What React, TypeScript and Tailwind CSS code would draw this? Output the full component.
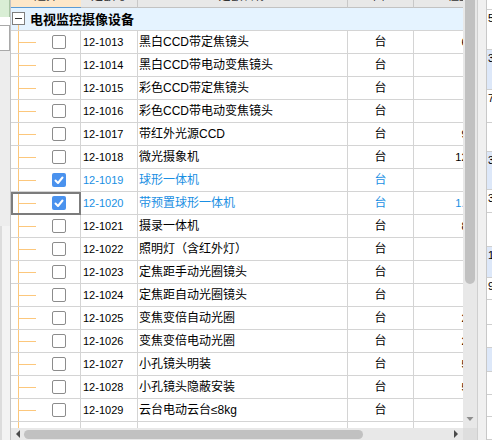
import React from "react";

type Row = {
  code: string;
  name: string;
  qty: string;
  checked?: boolean;
  focused?: boolean;
  partial?: boolean;
};

const rows: Row[] = [
  { code: "12-1013", name: "黑白CCD带定焦镜头", qty: "6.000" },
  { code: "12-1014", name: "黑白CCD带电动变焦镜头", qty: "" },
  { code: "12-1015", name: "彩色CCD带定焦镜头", qty: "" },
  { code: "12-1016", name: "彩色CCD带电动变焦镜头", qty: "" },
  { code: "12-1017", name: "带红外光源CCD", qty: "9.000" },
  { code: "12-1018", name: "微光摄象机", qty: "12.000" },
  { code: "12-1019", name: "球形一体机", qty: "", checked: true },
  { code: "12-1020", name: "带预置球形一体机", qty: "1.0000", checked: true, focused: true },
  { code: "12-1021", name: "摄录一体机", qty: "8.000" },
  { code: "12-1022", name: "照明灯（含红外灯）", qty: "" },
  { code: "12-1023", name: "定焦距手动光圈镜头", qty: "" },
  { code: "12-1024", name: "定焦距自动光圈镜头", qty: "" },
  { code: "12-1025", name: "变焦变倍自动光圈", qty: "2.000" },
  { code: "12-1026", name: "变焦变倍电动光圈", qty: "2.000" },
  { code: "12-1027", name: "小孔镜头明装", qty: "5.000" },
  { code: "12-1028", name: "小孔镜头隐蔽安装", qty: "5.000" },
  { code: "12-1029", name: "云台电动云台≤8kg", qty: "" },
  { code: "", name: "", qty: "", partial: true },
];

// strip of the neighbouring grid that peeks in on the right
const sideRows: { h: number; blue?: boolean; t?: string }[] = [
  { h: 10 },
  { h: 40, t: "5" },
  { h: 40, blue: true, t: "3" },
  { h: 33, t: "7" },
  { h: 29 },
  { h: 38, blue: true, t: "3" },
  { h: 23, t: "3" },
  { h: 34 },
  { h: 31, blue: true, t: "1" },
  { h: 22, t: "9" },
  { h: 25 },
  { h: 23 },
  { h: 24, blue: true },
  { h: 23 },
  { h: 22 },
  { h: 23 },
];

const cols = "grid grid-cols-[70px_57px_210px_66px_79px]";

function Checkbox({ checked }: { checked?: boolean }) {
  if (checked) {
    return (
      <span className="ml-[16px] flex h-[14px] w-[14px] items-center justify-center rounded-[2px] bg-[#4a92ee]">
        <svg viewBox="0 0 14 14" className="h-[14px] w-[14px]">
          <polyline points="3.5,7.5 6,10 10.5,4.5" fill="none" stroke="white" strokeWidth={2} strokeLinecap="round" strokeLinejoin="round" />
        </svg>
      </span>
    );
  }
  return <span className="ml-[16px] h-[14px] w-[14px] rounded-[2px] border border-[#8c8c8c] bg-white" />;
}

export default function App() {
  return (
    <div className="flex h-[440px] w-[492px] overflow-hidden bg-white font-['Liberation_Sans','Noto_Sans_CJK_SC',sans-serif] text-black">
      {/* left neighbour panel */}
      <div className="flex w-[10px] flex-col bg-[#ececec]">
        <div className="h-[17px] border-r border-[#a8c4a4] bg-[#d9eed5]" />
        <div className="h-[8px] bg-white" />
        <div className="h-[26px] border-y border-r border-[#a9a9a9] bg-white" />
        <div className="h-[175px] bg-[#ededed]" />
        <div className="flex-1 border-l-2 border-[#dcdcdc] bg-[#f3f3f3]" />
      </div>

      {/* main grid */}
      <div className="flex w-[453px] flex-col border-l border-[#c4c4c4]">
        <div className="flex-1 overflow-hidden">
          <div className="w-[482px]">
            <div className={`${cols} h-[8px] text-[12px] leading-[14px] text-[#333]`}>
              {["选择", "定额号", "定额名称", "单位", "工程量"].map((h, i) => (
                <div
                  key={h}
                  className={`flex justify-center overflow-hidden border-b ${
                    i === 0 ? "border-[#5b9bd5] bg-[#fde7c9]" : "border-r border-b-[#c2c2c2] border-r-[#c8c8c8] bg-[#e8e8e8]"
                  }`}
                >
                  <span className="-mt-[11px]">{h}</span>
                </div>
              ))}
            </div>

            <div className="flex h-[23px] items-stretch border-b border-[#d4d4d4] bg-[#e5f3ff]">
              <div className="ml-px flex w-[13px] flex-col items-center pt-[4px]">
                <span className="flex h-[13px] w-[13px] items-center justify-center border border-[#7f7f7f] bg-white">
                  <span className="h-px w-[7px] bg-[#333]" />
                </span>
                <span className="w-px flex-1 bg-[#fcc77c]" />
              </div>
              <span className="ml-[5px] self-center text-[13px] font-bold leading-none">电视监控摄像设备</span>
            </div>

            {rows.map((r, idx) => {
              const tone = r.checked ? "text-[#1a8fe3]" : "text-black";
              return (
                <div key={idx} className={`${cols} h-[23px] ${tone}`}>
                  <div
                    className={`flex items-center border-r border-b border-[#d4d4d4] ${
                      r.focused ? "outline-2 -outline-offset-2 outline-[#7c7c7c]" : ""
                    }`}
                  >
                    <span className="ml-[7px] w-px self-stretch bg-[#fcc77c]" />
                    {!r.partial && <span className="h-px w-[17px] bg-[#fcc77c]" />}
                    {!r.partial && <Checkbox checked={r.checked} />}
                  </div>
                  <div className="flex items-center border-r border-b border-[#d4d4d4] pl-[2px] text-[11px]">{r.code}</div>
                  <div className="flex items-center overflow-hidden whitespace-nowrap border-r border-b border-[#d4d4d4] pl-px text-[12px]">
                    {r.name}
                  </div>
                  <div className="flex items-center justify-center border-r border-b border-[#d4d4d4] text-[12px]">
                    {r.partial ? "" : "台"}
                  </div>
                  <div className="flex items-center justify-end border-b border-[#d4d4d4] pr-1 text-[11px]">{r.qty}</div>
                </div>
              );
            })}
          </div>
        </div>

        {/* horizontal scrollbar */}
        <div className="flex h-[12px] items-center bg-[#e8e8e8]">
          <svg viewBox="0 0 6 8" className="ml-[4px] h-[8px] w-[6px]">
            <polygon points="5,0 5,8 1,4" fill="#4a4a4a" />
          </svg>
          <div className="ml-[3px] h-[9px] w-[339px] rounded-full bg-[#c1c1c1]" />
          <div className="flex-1" />
          <svg viewBox="0 0 6 8" className="mr-[4px] h-[8px] w-[6px]">
            <polygon points="1,0 1,8 5,4" fill="#4a4a4a" />
          </svg>
        </div>
      </div>

      {/* vertical scrollbar */}
      <div className="flex w-[14px] flex-col">
        <div className="flex flex-1 flex-col bg-[#e8e8e8]">
          <div className="ml-[2px] h-[284px] w-[10px] rounded-b-full bg-[#c1c1c1]" />
          <div className="flex-1" />
          <svg viewBox="0 0 14 14" className="mb-[2px] h-[14px] w-[14px]">
            <polygon points="3.5,5 10.5,5 7,9" fill="#8e8e8e" />
          </svg>
        </div>
        <div className="h-[12px] bg-[#dedede]" />
      </div>

      <div className="w-px bg-[#cfcfcf]" />
      <div className="w-[8px] bg-[#f0f0f0]" />
      <div className="w-px bg-[#c8c8c8]" />

      {/* right neighbour panel */}
      <div className="flex w-[5px] flex-col overflow-hidden">
        {sideRows.map((s, i) => (
          <div
            key={i}
            style={{ height: s.h }}
            className={`shrink-0 border-b border-[#cfcfcf] pl-px pt-[1px] text-[11px] leading-[14px] ${
              s.blue ? "bg-[#dde8f9]" : "bg-white"
            }`}
          >
            {s.t}
          </div>
        ))}
      </div>
    </div>
  );
}
